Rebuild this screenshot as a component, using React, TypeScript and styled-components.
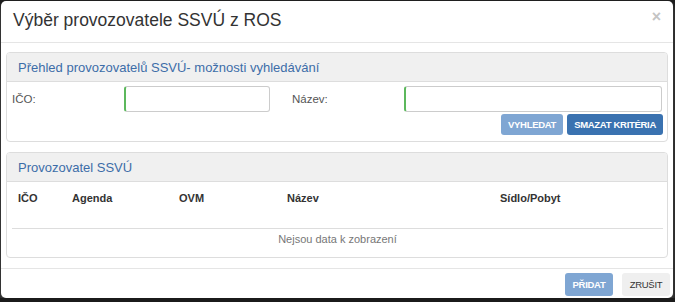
import React from "react";
import styled, { createGlobalStyle } from "styled-components";

const Global = createGlobalStyle`
  html, body { margin: 0; padding: 0; background: #1b1b1b; }
  body { font-family: "Liberation Sans", Arial, sans-serif; }
  * { box-sizing: border-box; }
`;

const Modal = styled.div`
  margin: 1px 0 0 1px;
  width: 672px;
  height: 297px;
  background: #fff;
  border-radius: 5px;
  display: flex;
  flex-direction: column;
  box-shadow: 0 4px 6px rgba(90,90,90,0.9);
`;

const Header = styled.div`
  height: 42px;
  border-bottom: 1px solid #e5e5e5;
  display: flex;
  align-items: center;
  justify-content: space-between;
  padding: 0 12px 2px 12px;
`;

const Title = styled.h4`
  margin: 0;
  font-size: 17.5px;
  font-weight: normal;
  color: #333;
`;

const Close = styled.span`
  font-size: 16px;
  font-weight: bold;
  color: #c4c4c4;
  margin-top: -8px;
`;

const Body = styled.div`
  padding: 9px 5px 0 5px;
  display: flex;
  flex-direction: column;
  gap: 10px;
  flex: 1;
`;

const Panel = styled.div`
  border: 1px solid #ddd;
  border-radius: 4px;
  background: #fff;
  overflow: hidden;
`;

const PanelHeading = styled.div`
  background: #f0f0f0;
  border-bottom: 1px solid #ddd;
  height: 29px;
  padding: 0 11px;
  display: flex;
  align-items: center;
  font-size: 13px;
  color: #3d6da8;
`;

const SearchBody = styled.div`
  padding: 4px 4px 6px 5px;
  display: flex;
  flex-direction: column;
  gap: 2px;
`;

const FieldRow = styled.div`
  display: flex;
  align-items: center;
`;

const Label = styled.label<{ $w: number }>`
  width: ${(p) => p.$w}px;
  font-size: 11.5px;
  color: #555;
`;

const Input = styled.div<{ $w: number }>`
  width: ${(p) => p.$w}px;
  height: 26px;
  border: 1px solid #ccc;
  border-left: 2px solid #5cb85c;
  border-radius: 3px;
  background: #fff;
`;

const Spacer = styled.div<{ $w: number }>`
  width: ${(p) => p.$w}px;
`;

const ButtonRow = styled.div`
  display: flex;
  justify-content: flex-end;
  gap: 4px;
`;

const Btn = styled.button<{ $bg: string; $color?: string }>`
  height: 21px;
  padding: 0 7px;
  border: none;
  border-radius: 3px;
  background: ${(p) => p.$bg};
  color: ${(p) => p.$color || "#fff"};
  font-family: "Liberation Sans", Arial, sans-serif;
  font-size: 9.5px;
  font-weight: bold;
  letter-spacing: -0.3px;
`;

const Table = styled.div`
  padding: 0 4px 0 5px;
`;

const HeadRow = styled.div`
  display: grid;
  grid-template-columns: 54px 107px 108px 213px 1fr;
  height: 47px;
  align-items: center;
  padding: 0 0 15px 6px;
  border-bottom: 1px solid #ddd;
`;

const Th = styled.div`
  font-size: 11px;
  font-weight: bold;
  color: #333;
`;

const Empty = styled.div`
  height: 28px;
  padding-bottom: 8px;
  display: flex;
  align-items: center;
  justify-content: center;
  font-size: 11px;
  color: #777;
`;

const Footer = styled.div`
  border-top: 1px solid #e5e5e5;
  padding: 4px 3px 2px 0;
  display: flex;
  justify-content: flex-end;
  gap: 9px;
`;

const FooterBtn = styled(Btn)`
  height: 23px;
  width: 48px;
  padding: 0;
  font-weight: ${(p) => (p.$color ? "normal" : "bold")};
`;

export default function App() {
  return (
    <>
      <Global />
      <Modal>
        <Header>
          <Title>Výběr provozovatele SSVÚ z ROS</Title>
          <Close>×</Close>
        </Header>
        <Body>
          <Panel>
            <PanelHeading>Přehled provozovatelů SSVÚ- možnosti vyhledávání</PanelHeading>
            <SearchBody>
              <FieldRow>
                <Label $w={112}>IČO:</Label>
                <Input $w={146} />
                <Spacer $w={22} />
                <Label $w={112}>Název:</Label>
                <Input $w={258} />
              </FieldRow>
              <ButtonRow>
                <Btn $bg="#7fa6d3">VYHLEDAT</Btn>
                <Btn $bg="#3a72b0">SMAZAT KRITÉRIA</Btn>
              </ButtonRow>
            </SearchBody>
          </Panel>
          <Panel>
            <PanelHeading>Provozovatel SSVÚ</PanelHeading>
            <Table>
              <HeadRow>
                <Th>IČO</Th>
                <Th>Agenda</Th>
                <Th>OVM</Th>
                <Th>Název</Th>
                <Th>Sídlo/Pobyt</Th>
              </HeadRow>
              <Empty>Nejsou data k zobrazení</Empty>
            </Table>
          </Panel>
        </Body>
        <Footer>
          <FooterBtn $bg="#7fa6d3">PŘIDAT</FooterBtn>
          <FooterBtn $bg="#efefef" $color="#333">ZRUŠIT</FooterBtn>
        </Footer>
      </Modal>
    </>
  );
}
